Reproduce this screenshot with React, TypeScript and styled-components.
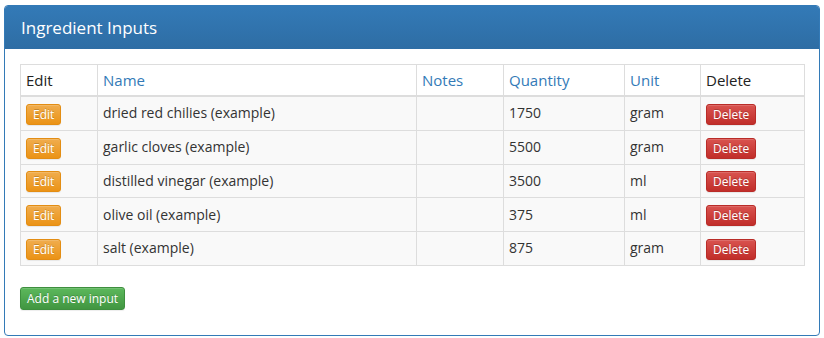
import styled, { createGlobalStyle } from "styled-components";

const GlobalStyle = createGlobalStyle`
  body {
    margin: 0;
    background: #fff;
    font-family: "Open Sans", "Noto Sans", sans-serif;
    color: #333;
  }
`;

const Page = styled.div`
  padding: 5px 4px;
`;

const Panel = styled.div`
  width: 816px;
  box-sizing: border-box;
  border: 1px solid #337ab7;
  border-radius: 4px;
  background: #fff;
  overflow: hidden;
`;

const PanelHeading = styled.div`
  height: 43px;
  display: flex;
  align-items: center;
  padding: 0 16px;
  background: linear-gradient(#337ab7, #2e6da4);
  color: #fff;
  font-size: 17px;
`;

const PanelBody = styled.div`
  padding: 15px;
`;

const Table = styled.table`
  width: 784px;
  border-collapse: collapse;
  table-layout: fixed;
  font-size: 14px;
  border: 1px solid #ddd;
`;

const Col = styled.col<{ $w: number }>`
  width: ${(p) => p.$w}px;
`;

const Th = styled.th<{ $link?: boolean }>`
  text-align: left;
  font-weight: 500;
  font-size: 15px;
  padding: 5px;
  line-height: 20px;
  border: 1px solid #ddd;
  border-bottom-width: 2px;
  color: ${(p) => (p.$link ? "#337ab7" : "#222")};
`;

const Row = styled.tr`
  background: #f9f9f9;
`;

const Td = styled.td`
  padding: 5px;
  line-height: 22px;
  border: 1px solid #ddd;
  height: 22px;
`;

const variants = {
  warning: { top: "#f0ad4e", bottom: "#eb9316", border: "#e38d13" },
  danger: { top: "#d9534f", bottom: "#c12e2a", border: "#b92c28" },
  success: { top: "#5cb85c", bottom: "#419641", border: "#3e8f3e" },
};

const Button = styled.button<{ $kind: keyof typeof variants }>`
  display: inline-block;
  box-sizing: border-box;
  height: 21px;
  padding: 0 6px;
  font-family: inherit;
  font-size: 12px;
  line-height: 19px;
  color: #fff;
  text-shadow: 0 -1px 0 rgba(0, 0, 0, 0.2);
  border-radius: 3px;
  border: 1px solid ${(p) => variants[p.$kind].border};
  background: linear-gradient(${(p) => variants[p.$kind].top}, ${(p) => variants[p.$kind].bottom});
  box-shadow: inset 0 1px 0 rgba(255, 255, 255, 0.15), 0 1px 1px rgba(0, 0, 0, 0.075);
  vertical-align: middle;
  cursor: pointer;
`;

const AddButton = styled(Button)`
  height: 23px;
  line-height: 21px;
`;

const Actions = styled.p`
  margin: 20px 0 10px;
`;

const inputs = [
  { name: "dried red chilies (example)", qty: 1750, unit: "gram" },
  { name: "garlic cloves (example)", qty: 5500, unit: "gram" },
  { name: "distilled vinegar (example)", qty: 3500, unit: "ml" },
  { name: "olive oil (example)", qty: 375, unit: "ml" },
  { name: "salt (example)", qty: 875, unit: "gram" },
];

const App = () => {
  return (
    <Page>
      <GlobalStyle />
      <Panel>
        <PanelHeading>Ingredient Inputs</PanelHeading>
        <PanelBody>
          <Table>
            <colgroup>
              <Col $w={77} />
              <Col $w={319} />
              <Col $w={87} />
              <Col $w={121} />
              <Col $w={76} />
              <Col $w={104} />
            </colgroup>
            <thead>
              <tr>
                <Th>Edit</Th>
                <Th $link>Name</Th>
                <Th $link>Notes</Th>
                <Th $link>Quantity</Th>
                <Th $link>Unit</Th>
                <Th>Delete</Th>
              </tr>
            </thead>
            <tbody>
              {inputs.map((item) => (
                <Row key={item.name}>
                  <Td>
                    <Button $kind="warning">Edit</Button>
                  </Td>
                  <Td>{item.name}</Td>
                  <Td></Td>
                  <Td>{item.qty}</Td>
                  <Td>{item.unit}</Td>
                  <Td>
                    <Button $kind="danger">Delete</Button>
                  </Td>
                </Row>
              ))}
            </tbody>
          </Table>
          <Actions>
            <AddButton $kind="success">Add a new input</AddButton>
          </Actions>
        </PanelBody>
      </Panel>
    </Page>
  );
};

export default App;
